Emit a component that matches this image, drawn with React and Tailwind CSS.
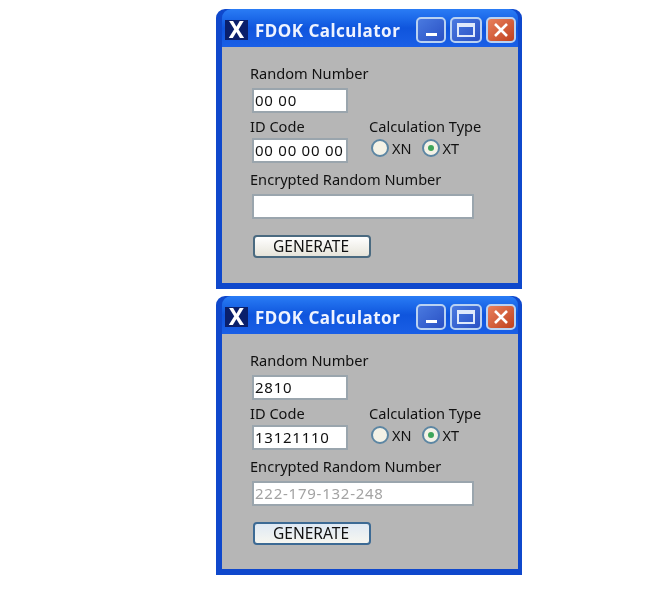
function WinButton({ className, children }) {
  return (
    <div className={`flex h-[26px] items-center justify-center rounded-[5px] border-2 border-[#b9d2f2] ${className}`}>
      {children}
    </div>
  );
}

function Field({ value, wide, muted }) {
  return (
    <input
      readOnly
      value={value}
      className={`ml-[2px] block h-[25px] border-2 border-[#9aa5ad] bg-white pb-[2px] pl-[1px] text-[15px] tracking-[0.75px] outline-none ${wide ? "w-[222px]" : "w-[96px]"} ${muted ? "text-[#a3a3a3]" : "text-[#111]"}`}
    />
  );
}

function Radio({ label, checked }) {
  return (
    <div className="flex items-center gap-[3px]">
      <div className="flex h-[18px] w-[18px] items-center justify-center rounded-full border-2 border-[#5c86a3] bg-[#f4f2e6]">
        {checked && <div className="h-[6px] w-[6px] rounded-full bg-[#3fa65a]" />}
      </div>
      <span className="text-[14.5px] leading-[18px] text-[#111]">{label}</span>
    </div>
  );
}

function Calculator({ random, id, encrypted, focused, bodyHeight, mb }) {
  return (
    <section className={`w-[306px] rounded-t-[9px] bg-[#0f48cc] pb-[6px] pl-[6px] pr-[4px] ${mb}`}>
      <header className="flex h-[38px] items-center rounded-t-[9px] bg-gradient-to-b from-[#2a7cf5] via-[#0f55dd] to-[#1a5fe6] pt-[3px]">
        <div className="ml-[3px] flex h-[20px] w-[23px] items-center justify-center bg-[#0a1f6b] text-[23px] font-bold leading-none text-white">X</div>
        <h1 className="ml-[7px] w-[146px] whitespace-nowrap pt-[3px] text-[17px] font-bold tracking-[0.5px] text-[#eef3ff]">FDOK Calculator</h1>
        <div className="ml-[15px] flex gap-[4px]">
          <WinButton className="w-[30px] bg-gradient-to-br from-[#4a7ae0] to-[#2a50c4]">
            <div className="mt-[9px] h-[3px] w-[11px] bg-white" />
          </WinButton>
          <WinButton className="w-[32px] bg-gradient-to-br from-[#4a7ae0] to-[#2a50c4]">
            <div className="h-[14px] w-[18px] border-2 border-t-[4px] border-[#dfe9fb]" />
          </WinButton>
          <WinButton className="w-[30px] bg-gradient-to-br from-[#e8805c] to-[#c0401c]">
            <svg width="18" height="16" viewBox="0 0 18 16" aria-hidden="true">
              <path d="M3 2 L15 14 M15 2 L3 14" stroke="#fff" strokeWidth="2.6" />
            </svg>
          </WinButton>
        </div>
      </header>
      <div className={`bg-[#b6b6b6] pl-[28px] pt-[17px] text-[14.6px] leading-[18px] text-[#111] ${bodyHeight}`}>
        <div>Random Number</div>
        <div className="mt-[6px]"><Field value={random} /></div>
        <div className="mt-[4px] flex">
          <div className="w-[119px]">
            <div>ID Code</div>
            <div className="mt-[3px]"><Field value={id} /></div>
          </div>
          <div>
            <div>Calculation Type</div>
            <div className="ml-[2px] mt-[4px] flex gap-[10px]">
              <Radio label="XN" />
              <Radio label="XT" checked />
            </div>
          </div>
        </div>
        <div className="mt-[7px]">Encrypted Random Number</div>
        <div className="mt-[6px]"><Field value={encrypted} wide muted /></div>
        <button
          type="button"
          className={`ml-[3px] mt-[16px] block h-[23px] w-[118px] rounded-[4px] border-2 pr-[2px] text-[15.5px] leading-none text-[#111] ${focused ? "border-[#3c6a94] bg-gradient-to-b from-[#dfe9f4] to-[#f6f6f0]" : "border-[#4a6a80] bg-gradient-to-b from-white to-[#e6e4da]"}`}
        >
          GENERATE
        </button>
      </div>
    </section>
  );
}

export default function App() {
  return (
    <main className="min-h-[600px] bg-white pl-[216px] pt-[9px] blur-[0.4px] [font-family:'Noto_Sans',sans-serif]">
      <Calculator random="00 00" id="00 00 00 00" encrypted="" bodyHeight="h-[236px]" mb="mb-[7px]" />
      <Calculator random="2810" id="13121110" encrypted="222-179-132-248" focused bodyHeight="h-[235px]" />
    </main>
  );
}
